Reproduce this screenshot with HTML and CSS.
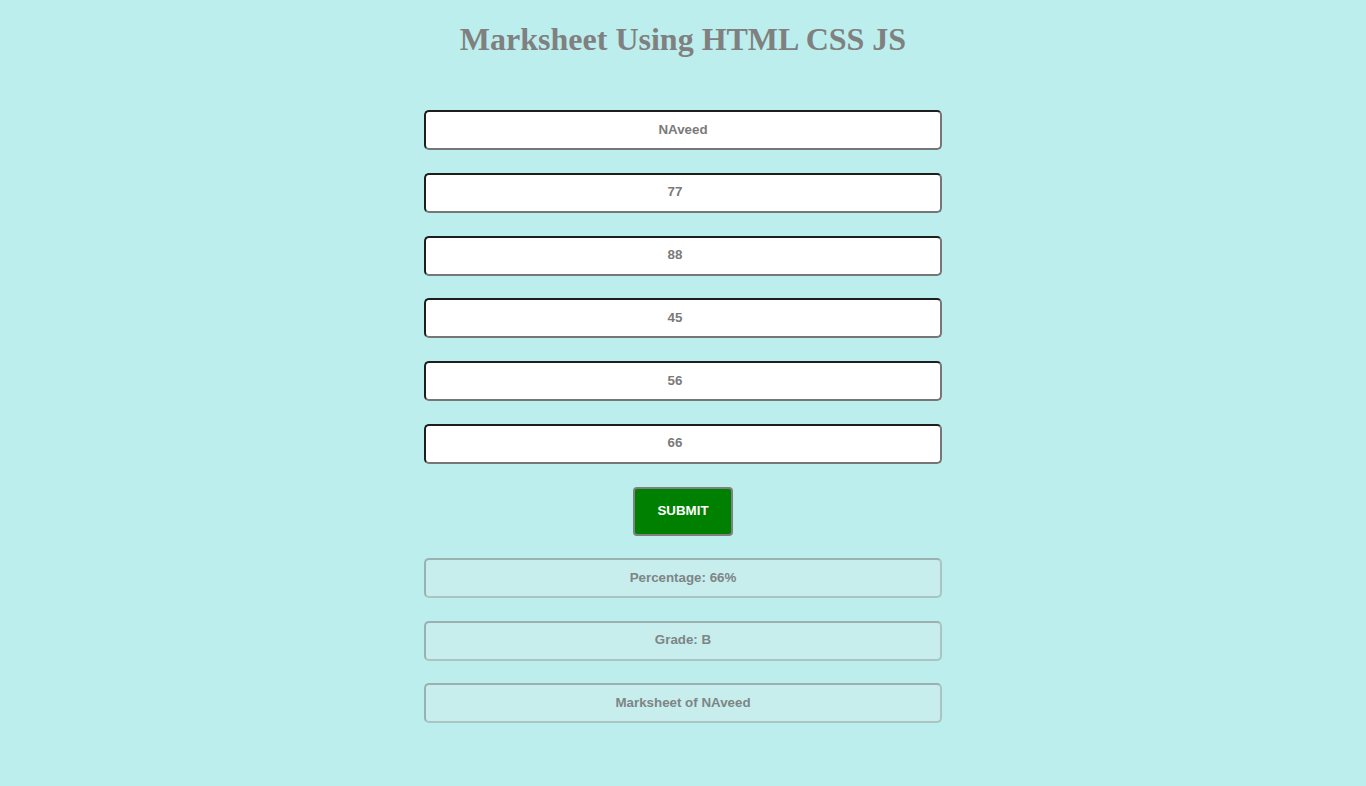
FILE: index.html
```html
<!DOCTYPE html>
<html>
<head>
<meta charset="utf-8">
<title>Marksheet</title>
<link rel="stylesheet" href="styles.css">
</head>
<body>
<h1 class="title">Marksheet Using HTML CSS JS</h1>
<div class="form">
  <div class="field">NAveed</div>
  <div class="field number">77</div>
  <div class="field number">88</div>
  <div class="field number">45</div>
  <div class="field number">56</div>
  <div class="field number">66</div>
  <button class="submit">SUBMIT</button>
  <div class="field result">Percentage: 66%</div>
  <div class="field result">Grade: B</div>
  <div class="field result">Marksheet of NAveed</div>
</div>
</body>
</html>
```

FILE: styles.css
```css
html, body {
  margin: 0;
  padding: 0;
  background: #bdeeee;
  height: 100%;
}
body {
  padding-top: 1px;
  box-sizing: border-box;
}
.title {
  font-family: "Liberation Serif", "Times New Roman", serif;
  font-size: 32px;
  font-weight: bold;
  color: #808080;
  text-align: center;
  margin: 20px 0 0 0;
  line-height: 37px;
}
.form {
  display: flex;
  flex-direction: column;
  align-items: center;
  gap: 22.75px;
  margin-top: 52px;
}
.field {
  box-sizing: border-box;
  width: 518px;
  height: 40px;
  padding-bottom: 2px;
  background: #ffffff;
  border-style: solid;
  border-width: 2px;
  border-color: #1e1e1e #767676 #767676 #1e1e1e;
  border-radius: 5px;
  display: flex;
  align-items: center;
  justify-content: center;
  font-family: "Liberation Sans", Arial, sans-serif;
  font-size: 13.33px;
  font-weight: bold;
  color: #7a7a7a;
}
.number {
  padding-right: 16px;
}
.result {
  margin-top: -0.25px;
  background: #c8eded;
  border-color: #9bb0b0 #aac4c4 #aac4c4 #9bb0b0;
  color: #7d8585;
}
.submit {
  box-sizing: border-box;
  width: 100px;
  height: 49px;
  background: #008000;
  border: 2px solid #808080;
  border-radius: 4px;
  color: #ffffff;
  font-family: "Liberation Sans", Arial, sans-serif;
  font-size: 13.33px;
  font-weight: bold;
  padding: 0 0 1px 0;
}
```
